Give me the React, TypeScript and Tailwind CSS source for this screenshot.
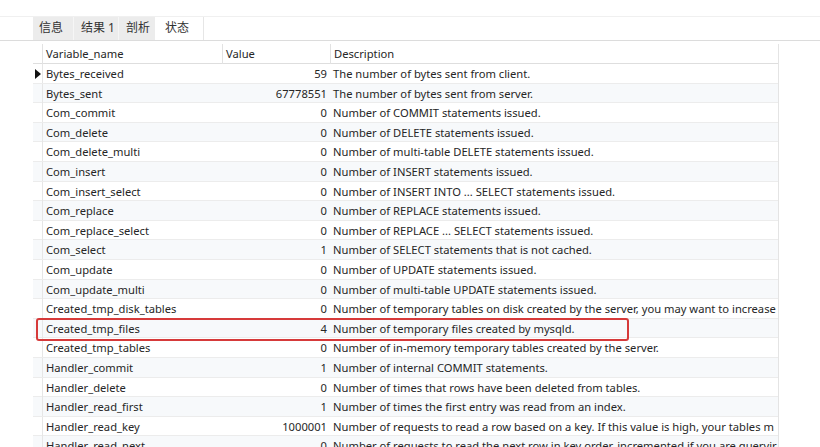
import React from "react";

type Row = { name: string; value: string; desc: string };

const rows: Row[] = [
  { name: "Bytes_received", value: "59", desc: "The number of bytes sent from client." },
  { name: "Bytes_sent", value: "67778551", desc: "The number of bytes sent from server." },
  { name: "Com_commit", value: "0", desc: "Number of COMMIT statements issued." },
  { name: "Com_delete", value: "0", desc: "Number of DELETE statements issued." },
  { name: "Com_delete_multi", value: "0", desc: "Number of multi-table DELETE statements issued." },
  { name: "Com_insert", value: "0", desc: "Number of INSERT statements issued." },
  { name: "Com_insert_select", value: "0", desc: "Number of INSERT INTO ... SELECT statements issued." },
  { name: "Com_replace", value: "0", desc: "Number of REPLACE statements issued." },
  { name: "Com_replace_select", value: "0", desc: "Number of REPLACE ... SELECT statements issued." },
  { name: "Com_select", value: "1", desc: "Number of SELECT statements that is not cached." },
  { name: "Com_update", value: "0", desc: "Number of UPDATE statements issued." },
  { name: "Com_update_multi", value: "0", desc: "Number of multi-table UPDATE statements issued." },
  {
    name: "Created_tmp_disk_tables",
    value: "0",
    desc: "Number of temporary tables on disk created by the server, you may want to increase",
  },
  { name: "Created_tmp_files", value: "4", desc: "Number of temporary files created by mysqld." },
  { name: "Created_tmp_tables", value: "0", desc: "Number of in-memory temporary tables created by the server." },
  { name: "Handler_commit", value: "1", desc: "Number of internal COMMIT statements." },
  { name: "Handler_delete", value: "0", desc: "Number of times that rows have been deleted from tables." },
  { name: "Handler_read_first", value: "1", desc: "Number of times the first entry was read from an index." },
  {
    name: "Handler_read_key",
    value: "1000001",
    desc: "Number of requests to read a row based on a key. If this value is high, your tables m",
  },
  {
    name: "Handler_read_next",
    value: "0",
    desc: "Number of requests to read the next row in key order, incremented if you are queryir",
  },
];

const tabs = [
  { label: "信息", cls: "pl-[6px] bg-[#ececec]" },
  { label: "结果 1", cls: "pl-[7px] bg-[#ececec] border-l border-[#f6f6f6]" },
  { label: "剖析", cls: "pl-[7px] bg-[#ececec] border-l border-[#f6f6f6]" },
  { label: "状态", cls: "pl-[10px] bg-white" },
];

export default function App() {
  return (
    <div className="w-[820px] h-[447px] overflow-hidden bg-white text-[11.2px] text-[#262626] font-['Noto_Sans','Noto_Sans_CJK_SC',sans-serif]">
      <div className="h-[17px] border-b border-[#f0f0f0]" />
      {/* tab strip */}
      <div className="flex h-[24px] border-b border-[#dcdcdc] pl-[33px]">
        <div className="grid grid-cols-[40px_45px_37px_48px] text-[12px] whitespace-nowrap">
          {tabs.map((t) => (
            <div key={t.label} className={t.cls + " pt-[2px] text-[#333]"}>
              {t.label}
            </div>
          ))}
        </div>
        <div className="w-[5px] border-l border-[#e6e6e6]" />
      </div>

      {/* grid */}
      <div className="relative ml-[33px] mt-[3px] w-[746px] border-r border-[#e4e4e4]">
        <div className="grid grid-cols-[9px_180px_108px_1fr] h-[20px] border-b border-[#dedede] bg-white">
          <div />
          <div className="border-l border-[#e2e2e2] pl-[3px] leading-[20px]">Variable_name</div>
          <div className="border-l border-[#e2e2e2] pl-[3px] leading-[20px]">Value</div>
          <div className="border-l border-[#e2e2e2] pl-[3px] leading-[20px]">Description</div>
        </div>
        {rows.map((r, i) => (
          <div
            key={r.name}
            className={
              "grid grid-cols-[9px_180px_108px_1fr] h-[19.6px] border-b border-[#ececec] " +
              (i % 2 === 1 ? "bg-[#f7f9fb]" : "bg-white")
            }
          >
            <div className="flex items-center justify-start">
              {i === 0 && (
                <svg width="6" height="10" viewBox="0 0 6 10" className="ml-[2px]">
                  <path d="M0 0 L6 5 L0 10 Z" fill="#111" />
                </svg>
              )}
            </div>
            <div className="border-l border-[#e6e6e6] pl-[3px] leading-[19px] whitespace-nowrap overflow-hidden">
              {r.name}
            </div>
            <div className="pr-[3px] text-right leading-[19px]">{r.value}</div>
            <div className="pl-[3px] leading-[19px] whitespace-nowrap overflow-hidden">{r.desc}</div>
          </div>
        ))}

        {/* highlight around Created_tmp_files */}
        <div className="absolute left-[3px] top-[274px] w-[593px] h-[23px] rounded-[3px] border-2 border-[#d63a3a]" />
      </div>
    </div>
  );
}
